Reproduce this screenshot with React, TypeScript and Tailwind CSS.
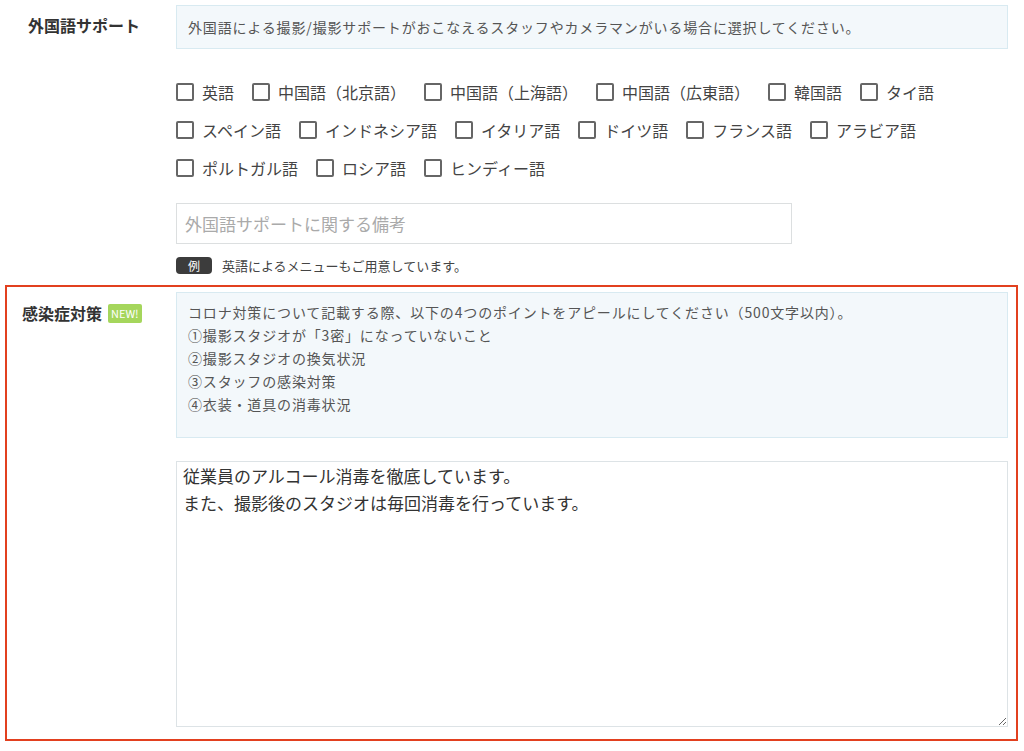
import React from "react";

const languages = [
  ["英語", "中国語（北京語）", "中国語（上海語）", "中国語（広東語）", "韓国語", "タイ語"],
  ["スペイン語", "インドネシア語", "イタリア語", "ドイツ語", "フランス語", "アラビア語"],
  ["ポルトガル語", "ロシア語", "ヒンディー語"],
];

const covidPoints = [
  "コロナ対策について記載する際、以下の4つのポイントをアピールにしてください（500文字以内）。",
  "①撮影スタジオが「3密」になっていないこと",
  "②撮影スタジオの換気状況",
  "③スタッフの感染対策",
  "④衣装・道具の消毒状況",
];

const Checkbox = ({ label }: { label: string }) => {
  return (
    <label className="flex items-center gap-[8px] cursor-pointer">
      <input
        type="checkbox"
        className="appearance-none w-[18px] h-[18px] border-2 border-[#666] rounded-[2px] bg-white"
      />
      <span className="text-[16px] text-[#444]">{label}</span>
    </label>
  );
};

export default function App() {
  return (
    <div className="w-[1024px] h-[751px] bg-white pt-[5px] font-['Noto_Sans_CJK_JP','Noto_Sans',sans-serif] text-[#333]">
      {/* 外国語サポート */}
      <div className="flex">
        <div className="w-[176px] pl-[28px] pt-[8px]">
          <span className="text-[16px] font-bold leading-[24px] text-[#333]">外国語サポート</span>
        </div>

        <div className="w-[832px]">
          <div className="h-[44px] flex items-center px-[11px] bg-[#f3f8fb] border border-[#d8eaf1] text-[14px] tracking-[0.06em] text-[#555]">
            外国語による撮影/撮影サポートがおこなえるスタッフやカメラマンがいる場合に選択してください。
          </div>

          <div className="mt-[24px]">
            {languages.map((row, i) => (
              <div key={i} className="h-[38px] flex items-center gap-x-[18px]">
                {row.map((lang) => (
                  <Checkbox key={lang} label={lang} />
                ))}
              </div>
            ))}
          </div>

          <input
            type="text"
            placeholder="外国語サポートに関する備考"
            className="mt-[16px] w-[616px] h-[41px] px-[8px] border border-[#dcdfe0] text-[17px] placeholder:text-[#aaa] outline-none"
          />

          <div className="mt-[13px] h-[17px] flex items-center gap-[10px]">
            <span className="w-[36px] h-[17px] flex items-center justify-center rounded-[4px] bg-[#3c3c3c] text-white text-[12px] leading-none">
              例
            </span>
            <span className="text-[13px] leading-[17px] text-[#444]">英語によるメニューもご用意しています。</span>
          </div>
        </div>
      </div>

      {/* 感染症対策 */}
      <div className="mt-[11px] ml-[5px] w-[1013px] border-2 border-[#e2401f] flex pt-[5px] pb-[12px]">
        <div className="w-[169px] pl-[15px] pt-[12px]">
          <div className="flex items-center gap-[6px]">
            <span className="text-[16px] font-bold leading-[19px] text-[#333]">感染症対策</span>
            <span className="h-[19px] px-[3px] flex items-center rounded-[2px] bg-[#a5d65c] text-white text-[11px] leading-none">
              NEW!
            </span>
          </div>
        </div>

        <div className="w-[832px]">
          <div className="h-[146px] pt-[8px] px-[11px] bg-[#f3f8fb] border border-[#d8eaf1] text-[14px] leading-[23px] tracking-[0.06em] text-[#555]">
            {covidPoints.map((line) => (
              <p key={line}>{line}</p>
            ))}
          </div>

          <textarea
            className="mt-[23px] block w-[832px] h-[266px] px-[6px] pt-0 border border-[#dde3e6] text-[17px] leading-[27px] text-[#333] outline-none"
            defaultValue={"従業員のアルコール消毒を徹底しています。\nまた、撮影後のスタジオは毎回消毒を行っています。"}
          />
        </div>
      </div>
    </div>
  );
}
